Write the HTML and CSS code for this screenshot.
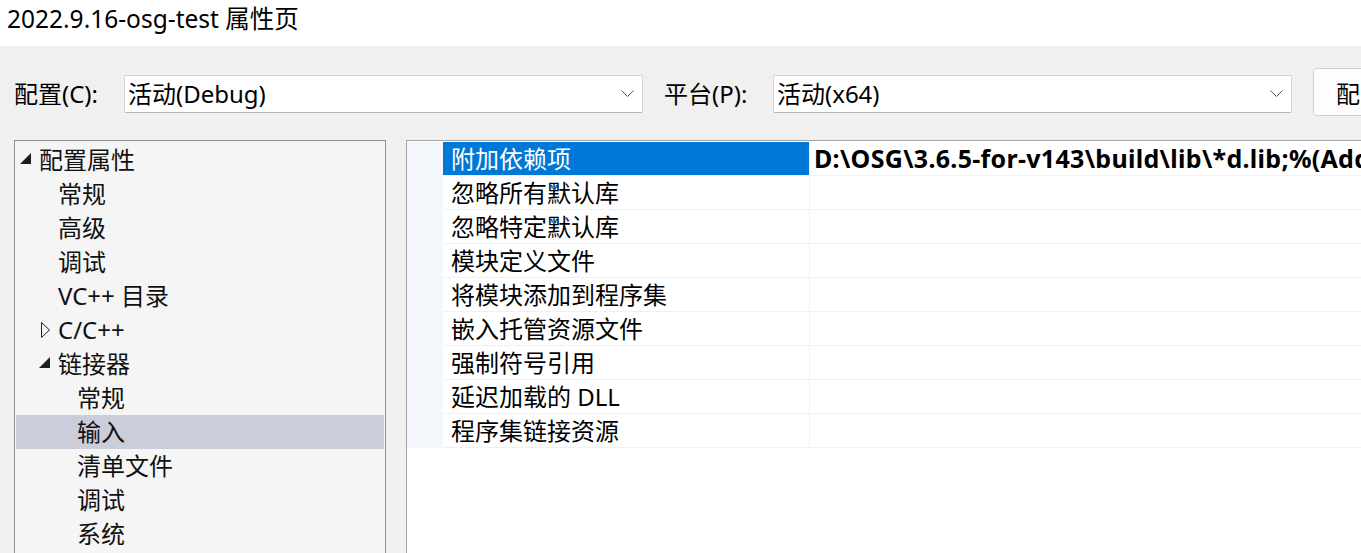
FILE: index.html
```html
<!DOCTYPE html>
<html lang="zh-CN">
<head>
  <meta charset="UTF-8" />
  <meta name="viewport" content="width=device-width, initial-scale=1.0" />
  <title>2022.9.16-osg-test 属性页</title>
  <link rel="stylesheet" href="styles.css">
</head>
<body>
  <div class="titlebar">2022.9.16-osg-test 属性页</div>

  <div class="toolbar">
    <label class="field-label">配置(C):</label>
    <div class="combo">
      <span>活动(Debug)</span>
      <svg class="chev" width="13" height="8" viewBox="0 0 13 8"><polyline points="0.5,0.5 6.5,6.5 12.5,0.5" fill="none" stroke="#555" stroke-width="1"/></svg>
    </div>
    <label class="field-label second">平台(P):</label>
    <div class="combo">
      <span>活动(x64)</span>
      <svg class="chev" width="13" height="8" viewBox="0 0 13 8"><polyline points="0.5,0.5 6.5,6.5 12.5,0.5" fill="none" stroke="#555" stroke-width="1"/></svg>
    </div>
    <button class="btn">配置管理器(O)...</button>
  </div>

  <div class="main">
    <div class="tree">
      <div class="node lv0">
        <span class="toggle"><svg width="20" height="34" viewBox="0 0 20 34"><polygon points="3,21 14,21 14,10" fill="#1e1e1e"/></svg></span>
        <span>配置属性</span>
      </div>
      <div class="node lv1"><span class="toggle"></span><span>常规</span></div>
      <div class="node lv1"><span class="toggle"></span><span>高级</span></div>
      <div class="node lv1"><span class="toggle"></span><span>调试</span></div>
      <div class="node lv1"><span class="toggle"></span><span>VC++ 目录</span></div>
      <div class="node lv1">
        <span class="toggle"><svg width="20" height="34" viewBox="0 0 20 34"><polygon points="5.5,9.5 13.5,17 5.5,24.5" fill="none" stroke="#1e1e1e" stroke-width="1"/></svg></span>
        <span>C/C++</span>
      </div>
      <div class="node lv1">
        <span class="toggle"><svg width="20" height="34" viewBox="0 0 20 34"><polygon points="3,21 14,21 14,10" fill="#1e1e1e"/></svg></span>
        <span>链接器</span>
      </div>
      <div class="node lv2"><span class="toggle"></span><span>常规</span></div>
      <div class="node lv2 current"><span class="toggle"></span><span>输入</span></div>
      <div class="node lv2"><span class="toggle"></span><span>清单文件</span></div>
      <div class="node lv2"><span class="toggle"></span><span>调试</span></div>
      <div class="node lv2"><span class="toggle"></span><span>系统</span></div>
    </div>

    <div class="grid">
      <div class="row selected">
        <div class="gutter"></div>
        <div class="name">附加依赖项</div>
        <div class="value">D:\OSG\3.6.5-for-v143\build\lib\*d.lib;%(Add</div>
      </div>
      <div class="row"><div class="gutter"></div><div class="name">忽略所有默认库</div><div class="value"></div></div>
      <div class="row"><div class="gutter"></div><div class="name">忽略特定默认库</div><div class="value"></div></div>
      <div class="row"><div class="gutter"></div><div class="name">模块定义文件</div><div class="value"></div></div>
      <div class="row"><div class="gutter"></div><div class="name">将模块添加到程序集</div><div class="value"></div></div>
      <div class="row"><div class="gutter"></div><div class="name">嵌入托管资源文件</div><div class="value"></div></div>
      <div class="row"><div class="gutter"></div><div class="name">强制符号引用</div><div class="value"></div></div>
      <div class="row"><div class="gutter"></div><div class="name">延迟加载的 DLL</div><div class="value"></div></div>
      <div class="row"><div class="gutter"></div><div class="name">程序集链接资源</div><div class="value"></div></div>
    </div>
  </div>
</body>
</html>
```

FILE: styles.css
```css
html, body {
  margin: 0;
  overflow: hidden;
}
body {
  width: 1361px;
  height: 553px;
  background: #f0f0f0;
  color: #000;
  font-family: "Noto Sans", "Noto Sans CJK SC", sans-serif;
  font-size: 24px;
}
.titlebar {
  height: 46px;
  line-height: 38px;
  padding-left: 7px;
  background: #fff;
  font-size: 24.5px;
  white-space: nowrap;
}
.toolbar {
  height: 65px;
  padding: 29px 0 0 14px;
  display: flex;
  align-items: flex-start;
  white-space: nowrap;
}
.field-label {
  width: 110px;
  line-height: 38px;
  flex: none;
}
.field-label.second {
  width: 109px;
  margin-left: 21px;
}
.combo {
  width: 506px;
  height: 36px;
  flex: none;
  display: flex;
  align-items: center;
  justify-content: space-between;
  padding: 0 8px 0 3px;
  background: #fff;
  border: 1px solid #d2d2d2;
  border-bottom-color: #b8b8b8;
  border-radius: 2px;
}
.combo span {
  line-height: 36px;
}
.btn {
  flex: none;
  margin: -7px 0 0 21px;
  height: 48px;
  width: 120px;
  padding: 0 0 0 22px;
  text-align: left;
  font: inherit;
  color: #000;
  background: #fdfdfd;
  border: 1px solid #d0d0d0;
  border-radius: 4px;
  white-space: nowrap;
  overflow: hidden;
}
.main {
  display: flex;
  gap: 20px;
  padding-left: 14px;
  height: 440px;
}
.tree {
  width: 368px;
  flex: none;
  padding: 2px 1px 0;
  background: #f5f5f5;
  border: 1px solid #8f8f8f;
  color: #111;
}
.node {
  display: flex;
  height: 34px;
  line-height: 34px;
  white-space: nowrap;
}
.node.lv0 { padding-left: 3px; }
.node.lv1 { padding-left: 22px; }
.node.lv2 { padding-left: 41px; }
.node.current {
  background: #cbcdda;
}
.toggle {
  width: 20px;
  height: 34px;
  flex: none;
}
.toggle svg {
  display: block;
  margin-left: -2px;
}
.grid {
  flex: 1;
  padding-top: 1px;
  background: #fff;
  border-left: 1px solid #a5a5a5;
  border-top: 1px solid #a5a5a5;
  overflow: hidden;
}
.row {
  display: grid;
  grid-template-columns: 36px 366px 1fr;
  height: 34px;
  line-height: 33px;
  white-space: nowrap;
}
.gutter {
  background: #f3f6fb;
}
.name {
  padding-left: 8px;
  border-bottom: 1px solid #eef0f3;
  overflow: hidden;
}
.value {
  padding-left: 4px;
  border-left: 1px solid #eef0f3;
  border-bottom: 1px solid #eef0f3;
  font-size: 25px;
  letter-spacing: 0.3px;
  font-weight: bold;
  overflow: hidden;
}
.row.selected .name {
  background: #0078d7;
  color: #fff;
}
```
